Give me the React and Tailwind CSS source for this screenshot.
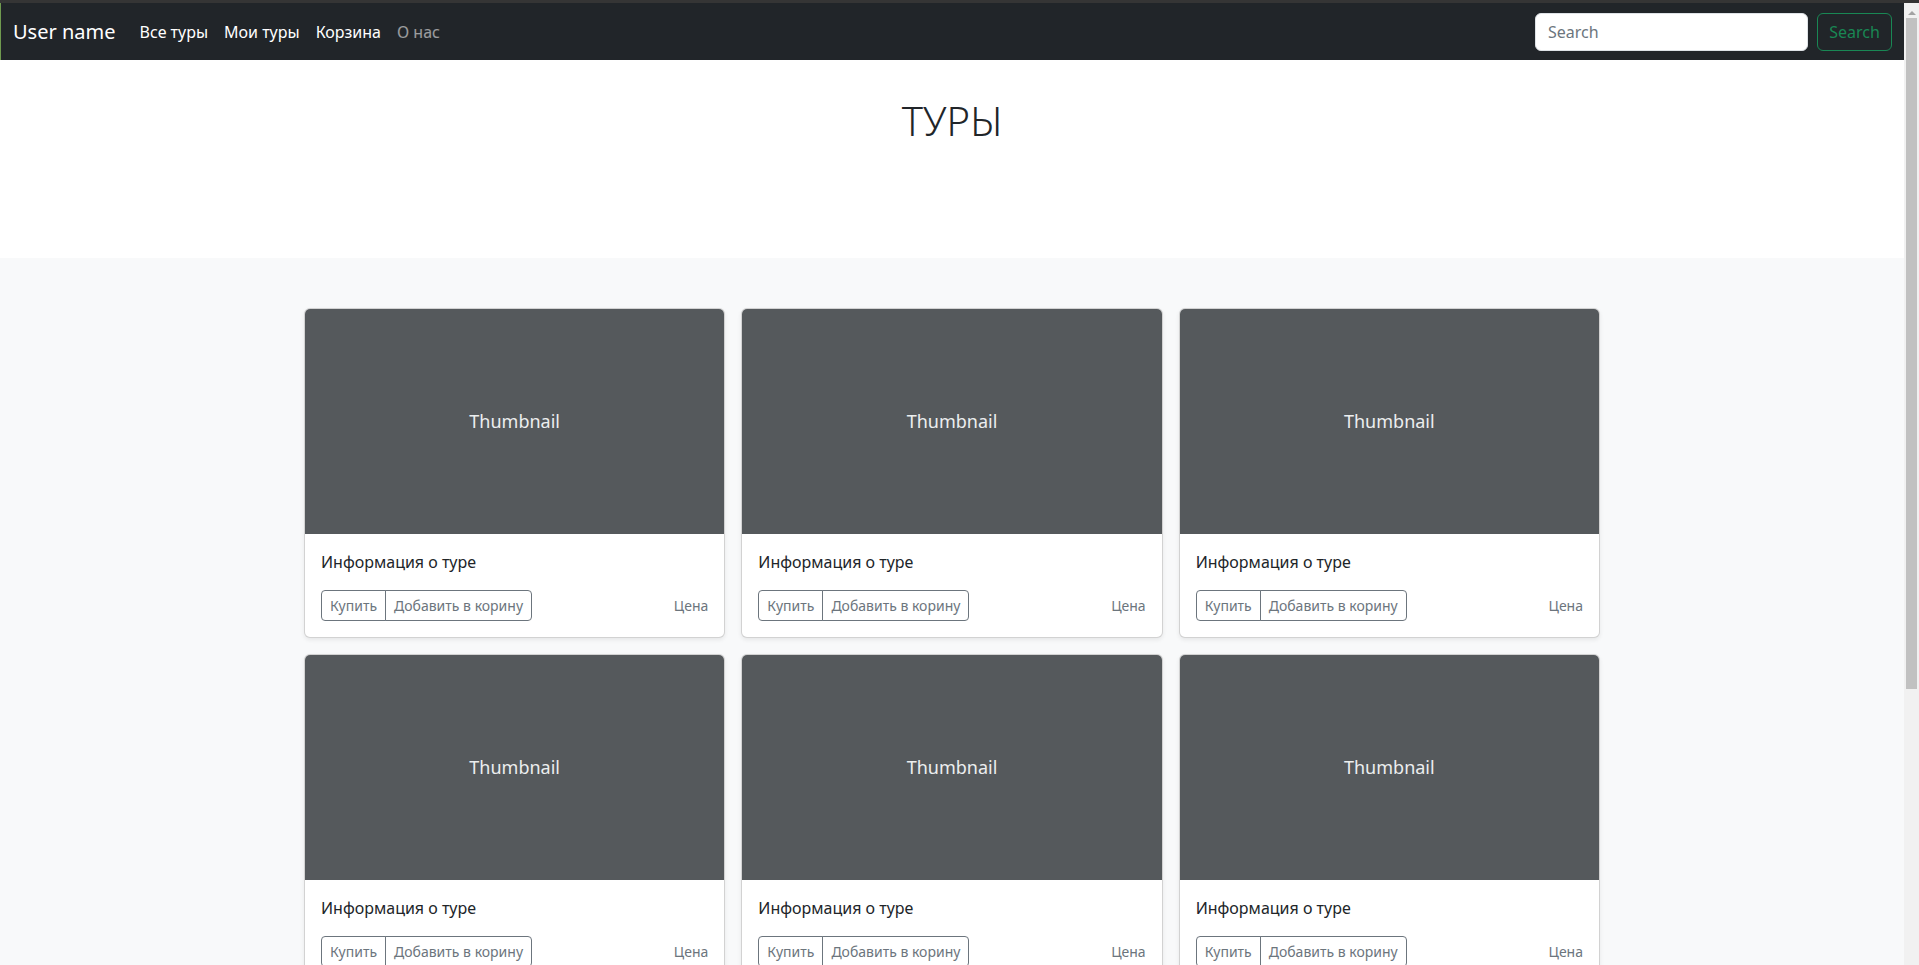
import { useState } from 'react'

const navLinks = [
  { label: 'Все туры', active: true },
  { label: 'Мои туры', active: true },
  { label: 'Корзина', active: true },
  { label: 'О нас', active: false },
]

function TourCard() {
  return (
    <div className="overflow-hidden rounded-[6px] border border-black/[0.175] bg-white shadow-[0_2px_4px_rgba(0,0,0,0.075)]">
      <div className="flex h-[225px] items-center justify-center bg-[#55595c] text-[18px] text-[#eceeef]">
        Thumbnail
      </div>
      <div className="p-4">
        <p className="mb-4 text-[16px] leading-6 text-[#212529]">Информация о туре</p>
        <div className="flex items-center justify-between">
          <div className="flex">
            <button
              type="button"
              className="h-[31px] rounded-l-[4px] border border-[#6c757d] px-2 text-[14px] text-[#6c757d]"
            >
              Купить
            </button>
            <button
              type="button"
              className="-ml-px h-[31px] rounded-r-[4px] border border-[#6c757d] px-2 text-[14px] text-[#6c757d]"
            >
              Добавить в корину
            </button>
          </div>
          <small className="text-[14px] text-[#6c757d]">Цена</small>
        </div>
      </div>
    </div>
  )
}

function FakeScrollbar() {
  // полоса прокрутки как на скриншоте
  return (
    <div className="flex w-[15px] shrink-0 flex-col items-center bg-[#f1f1f1]">
      <div className="flex h-[12px] w-full items-end justify-center">
        <div className="h-0 w-0 border-x-[4px] border-b-[4px] border-x-transparent border-b-[#a3a3a3]" />
      </div>
      <div className="mt-[3px] h-[671px] w-[11px] bg-[#c1c1c1]" />
    </div>
  )
}

export default function App() {
  const [query, setQuery] = useState('')
  const cards = Array.from({ length: 9 }, (_, i) => i)

  return (
    <div className="flex h-screen flex-col overflow-hidden bg-white font-['Noto_Sans',sans-serif] text-[#212529]">
      <div className="h-[3px] shrink-0 bg-[#353535]" />
      <div className="flex min-h-0 flex-1">
        <div className="min-w-0 flex-1 overflow-hidden">
          <nav className="flex h-[57px] items-center justify-between border-l border-[#6f9a4f] bg-[#212529] px-3">
            <div className="flex items-center">
              <a href="#" className="mr-4 text-[20px] text-white">
                User name
              </a>
              <ul className="flex items-center">
                {navLinks.map((link) => (
                  <li key={link.label}>
                    <a
                      href="#"
                      className={`px-2 text-[16px] ${link.active ? 'text-white' : 'text-white/55'}`}
                    >
                      {link.label}
                    </a>
                  </li>
                ))}
              </ul>
            </div>
            <form className="flex items-center gap-[9px]" onSubmit={(event) => event.preventDefault()}>
              <input
                value={query}
                onChange={(event) => setQuery(event.target.value)}
                placeholder="Search"
                className="h-[38px] w-[273px] rounded-[6px] border border-[#dee2e6] bg-white px-3 text-[16px] text-[#212529] outline-none placeholder:text-[#6c757d]"
              />
              <button
                type="submit"
                className="h-[38px] w-[75px] rounded-[6px] border border-[#198754] text-[16px] text-[#198754]"
              >
                Search
              </button>
            </form>
          </nav>

          <section className="h-[198px] pt-[37px] text-center">
            <h1 className="text-[40px] font-light leading-[48px]">ТУРЫ</h1>
          </section>

          <div className="bg-[#f8f9fa] pt-[50px] pb-12">
            <div className="mx-auto max-w-[1320px] px-3">
              <div className="grid grid-cols-3 gap-4">
                {cards.map((i) => (
                  <TourCard key={i} />
                ))}
              </div>
            </div>
          </div>
        </div>
        <FakeScrollbar />
      </div>
    </div>
  )
}
